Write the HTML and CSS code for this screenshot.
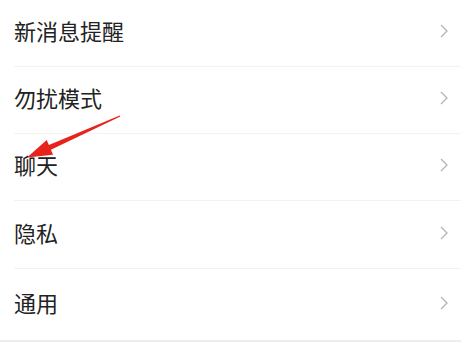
FILE: index.html
```html
<!DOCTYPE html>
<html lang="zh-CN">
<head>
    <meta charset="UTF-8">
    <meta name="viewport" content="width=device-width, initial-scale=1.0">
    <title>设置</title>
    <link rel="stylesheet" href="styles.css">
</head>
<body>

    <div class="settings-list">
        <div class="setting-row">
            <span class="setting-label">新消息提醒</span>
            <svg class="chevron" viewBox="0 0 8 14"><path d="M1 1 L7 7 L1 13"/></svg>
        </div>
        <div class="setting-row">
            <span class="setting-label">勿扰模式</span>
            <svg class="chevron" viewBox="0 0 8 14"><path d="M1 1 L7 7 L1 13"/></svg>
        </div>
        <div class="setting-row">
            <span class="setting-label">聊天</span>
            <svg class="chevron" viewBox="0 0 8 14"><path d="M1 1 L7 7 L1 13"/></svg>
        </div>
        <div class="setting-row">
            <span class="setting-label">隐私</span>
            <svg class="chevron" viewBox="0 0 8 14"><path d="M1 1 L7 7 L1 13"/></svg>
        </div>
        <div class="setting-row last">
            <span class="setting-label">通用</span>
            <svg class="chevron" viewBox="0 0 8 14"><path d="M1 1 L7 7 L1 13"/></svg>
        </div>
    </div>
    <div class="bottom-gap"></div>

    <!-- annotation arrow pointing at 聊天 -->
    <svg class="arrow" viewBox="0 0 461 342">
        <polygon points="27,157.5 53.1,154.7 50.9,149.7 120.3,116.6 119.7,115.4 48.9,145.1 46.7,140.1"/>
    </svg>

</body>
</html>
```

FILE: styles.css
```css
body {
    margin: 0;
    font-family: "Noto Sans CJK SC", "Noto Sans", sans-serif;
    background: #ededed;
}
.settings-list {
    background: white;
    padding-left: 14px;
}
.setting-row {
    display: flex;
    align-items: center;
    justify-content: space-between;
    height: 66px;
    border-bottom: 1px solid #f3f3f3;
    padding-right: 13px;
}
.setting-row:nth-child(4) {
    height: 67px;
}
.setting-row.last {
    height: 71px;
    border-bottom: none;
}
.setting-label {
    font-size: 22px;
    color: #222;
    line-height: 1;
    padding-bottom: 6px;
}
.chevron {
    width: 8px;
    height: 14px;
    margin-top: -4px;
}
.chevron path {
    fill: none;
    stroke: #b4b4b4;
    stroke-width: 1.3;
}
.bottom-gap {
    height: 10px;
}
.arrow {
    position: absolute;
    left: 0;
    top: 0;
    width: 461px;
    height: 342px;
}
.arrow polygon {
    fill: #e8231b;
}
```
